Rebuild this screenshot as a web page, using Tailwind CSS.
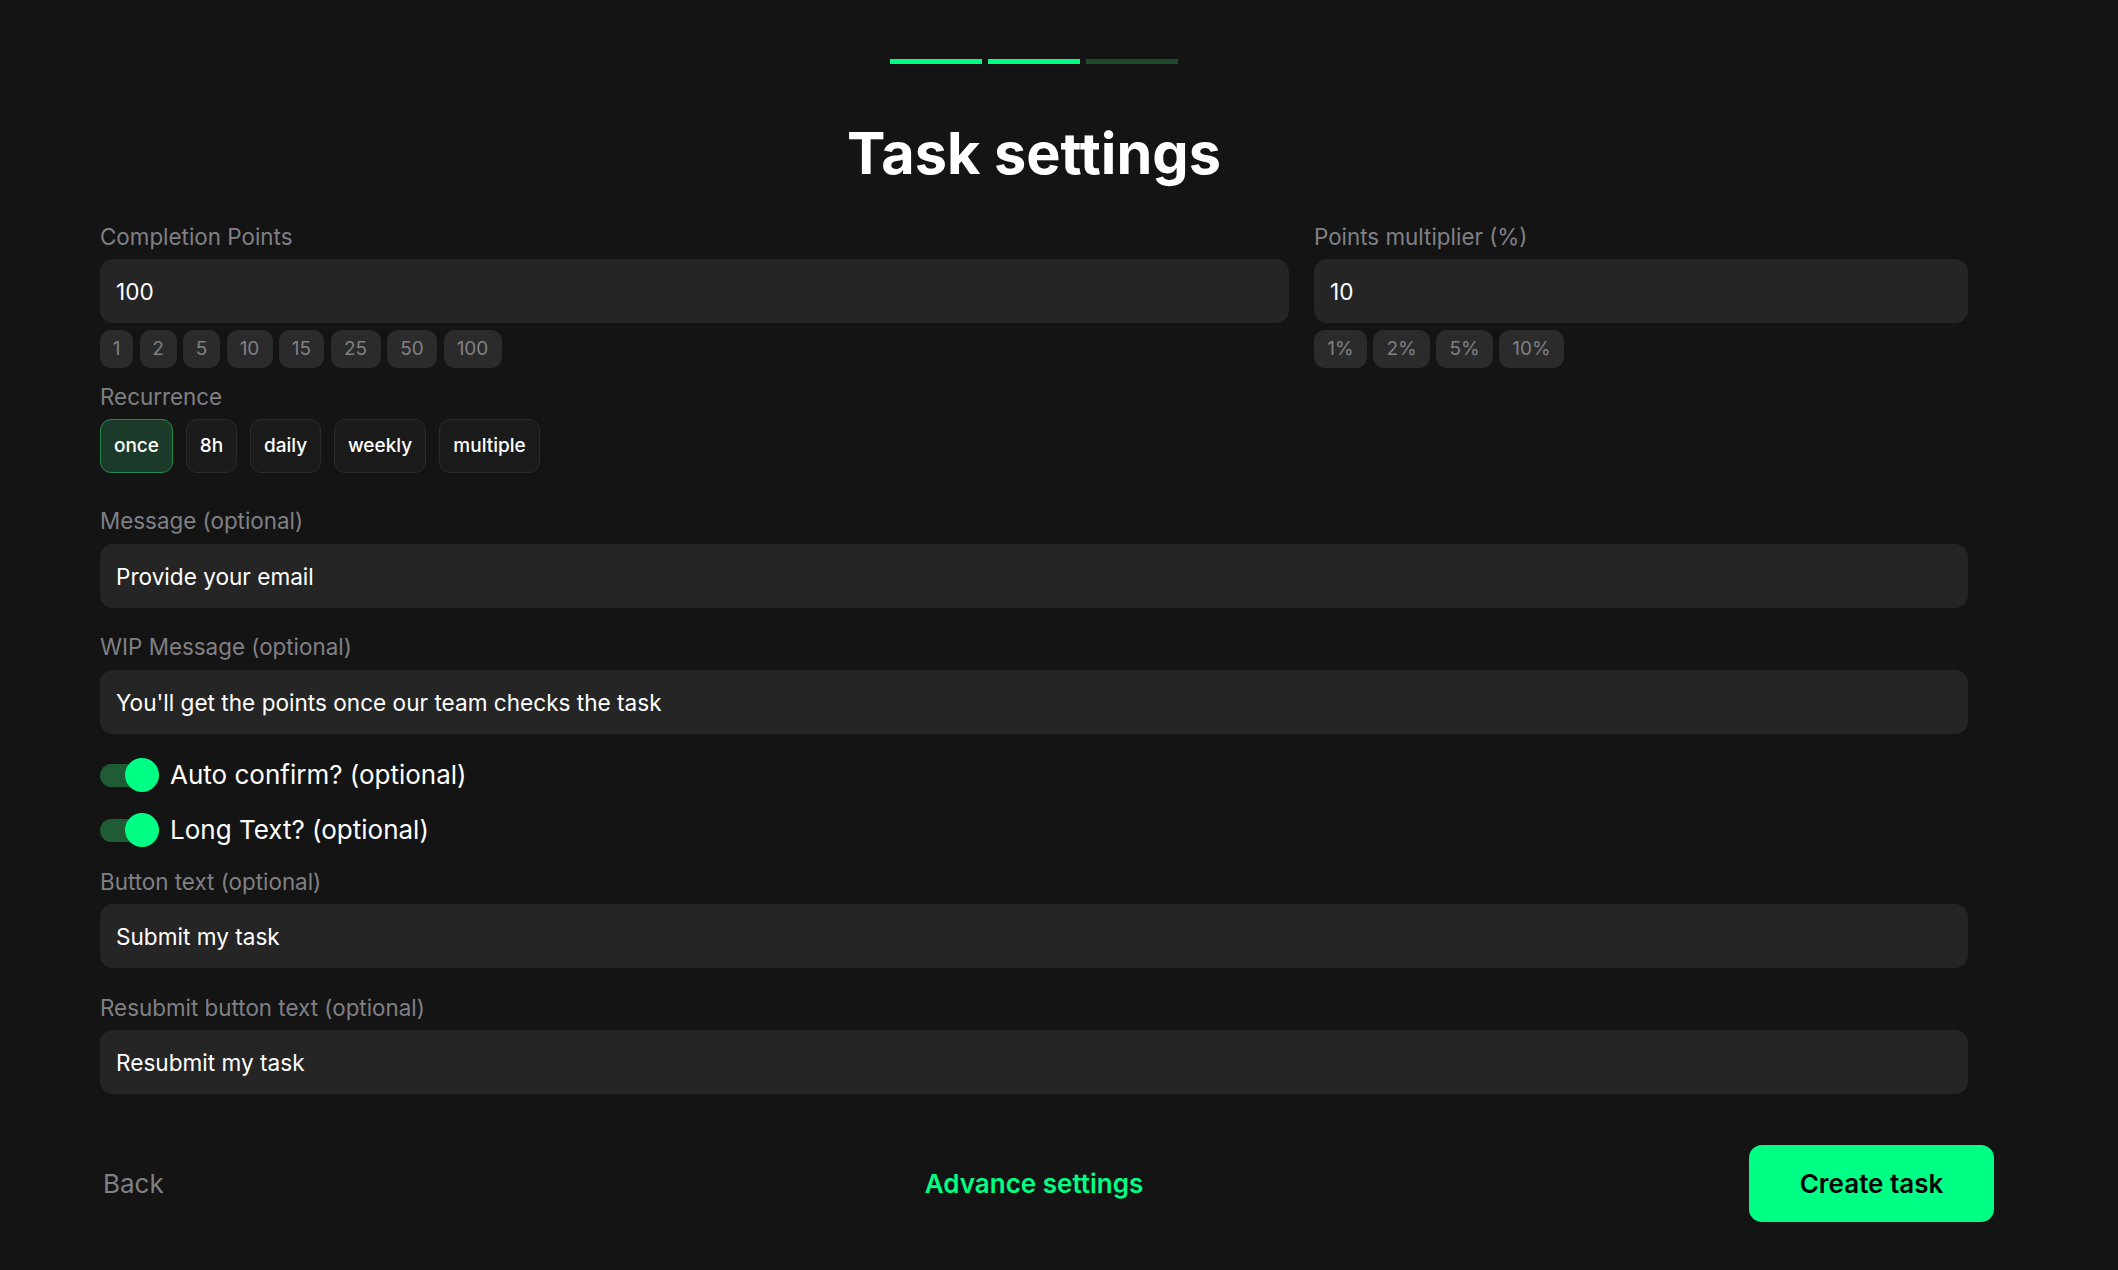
<!DOCTYPE html>
<html lang="en">
<head>
<meta charset="utf-8">
<title>Task settings</title>
<script src="https://cdn.jsdelivr.net/npm/@tailwindcss/browser@4"></script>
</head>
<body class="m-0 h-[1270px] overflow-hidden bg-[#141414] font-['Inter',sans-serif] text-white">
<main class="ml-[100px] w-[1868px] pt-[59px]">
  <div class="flex justify-center gap-[6px]">
    <div class="h-[5px] w-[92px] bg-[#00ff85]"></div>
    <div class="h-[5px] w-[92px] bg-[#00ff85]"></div>
    <div class="h-[5px] w-[92px] bg-[#1f4a2e]"></div>
  </div>
  <h1 class="mt-[55px] text-center text-[57.6px] leading-[68px] font-bold">Task settings</h1>

  <div class="mt-[34px] grid grid-cols-[1189px_654px] gap-x-[25px]">
    <div>
      <label class="block text-[22.4px] leading-[32px] text-[#808084]">Completion Points</label>
      <input class="mt-[6px] block h-[64px] w-full rounded-[13px] bg-[#252525] px-[16px] text-[22.6px] text-white outline-none" value="100">
      <div class="mt-[7px] flex gap-[6.5px] text-[19px] text-[#808084]">
        <span class="flex h-[38px] w-[33px] items-center justify-center rounded-[11px] bg-[#2b2b2b]">1</span>
        <span class="flex h-[38px] w-[37px] items-center justify-center rounded-[11px] bg-[#2b2b2b]">2</span>
        <span class="flex h-[38px] w-[37px] items-center justify-center rounded-[11px] bg-[#2b2b2b]">5</span>
        <span class="flex h-[38px] w-[46px] items-center justify-center rounded-[11px] bg-[#2b2b2b]">10</span>
        <span class="flex h-[38px] w-[45px] items-center justify-center rounded-[11px] bg-[#2b2b2b]">15</span>
        <span class="flex h-[38px] w-[50px] items-center justify-center rounded-[11px] bg-[#2b2b2b]">25</span>
        <span class="flex h-[38px] w-[50px] items-center justify-center rounded-[11px] bg-[#2b2b2b]">50</span>
        <span class="flex h-[38px] w-[58px] items-center justify-center rounded-[11px] bg-[#2b2b2b]">100</span>
      </div>
    </div>
    <div>
      <label class="block text-[22.4px] leading-[32px] text-[#808084]">Points multiplier (%)</label>
      <input class="mt-[6px] block h-[64px] w-full rounded-[13px] bg-[#252525] px-[16px] text-[22.6px] text-white outline-none" value="10">
      <div class="mt-[7px] flex gap-[6px] text-[19px] text-[#808084]">
        <span class="flex h-[38px] w-[53px] items-center justify-center rounded-[11px] bg-[#2b2b2b]">1%</span>
        <span class="flex h-[38px] w-[57px] items-center justify-center rounded-[11px] bg-[#2b2b2b]">2%</span>
        <span class="flex h-[38px] w-[57px] items-center justify-center rounded-[11px] bg-[#2b2b2b]">5%</span>
        <span class="flex h-[38px] w-[65px] items-center justify-center rounded-[11px] bg-[#2b2b2b]">10%</span>
      </div>
    </div>
  </div>

  <label class="mt-[13px] block text-[22.4px] leading-[32px] text-[#808084]">Recurrence</label>
  <div class="mt-[6px] flex gap-[13px] text-[19px] font-medium">
    <span class="flex h-[54px] w-[73px] items-center justify-center rounded-[11px] border border-[#1f8a4c] bg-[#1c3a29]">once</span>
    <span class="flex h-[54px] w-[51px] items-center justify-center rounded-[11px] border border-[#2a2a2a] bg-[#1b1b1b]">8h</span>
    <span class="flex h-[54px] w-[71px] items-center justify-center rounded-[11px] border border-[#2a2a2a] bg-[#1b1b1b]">daily</span>
    <span class="flex h-[54px] w-[92px] items-center justify-center rounded-[11px] border border-[#2a2a2a] bg-[#1b1b1b]">weekly</span>
    <span class="flex h-[54px] w-[101px] items-center justify-center rounded-[11px] border border-[#2a2a2a] bg-[#1b1b1b]">multiple</span>
  </div>

  <label class="mt-[32px] block text-[22.4px] leading-[32px] text-[#808084]">Message (optional)</label>
  <input class="mt-[7px] block h-[64px] w-full rounded-[13px] bg-[#252525] px-[16px] text-[22.6px] text-white outline-none" value="Provide your email">

  <label class="mt-[23px] block text-[22.4px] leading-[32px] text-[#808084]">WIP Message (optional)</label>
  <input class="mt-[7px] block h-[64px] w-full rounded-[13px] bg-[#252525] px-[16px] text-[22.6px] text-white outline-none" value="You'll get the points once our team checks the task">

  <div class="mt-[24px] flex h-[34px] items-center gap-[11px] text-[26px]">
    <span class="relative block h-[23px] w-[59px] rounded-full bg-[#1f5c35]"><span class="absolute top-[-6px] right-0 size-[34px] rounded-full bg-[#00ff85]"></span></span>
    <span class="pb-[1px]">Auto confirm? (optional)</span>
  </div>
  <div class="mt-[21px] flex h-[34px] items-center gap-[11px] text-[26px]">
    <span class="relative block h-[23px] w-[59px] rounded-full bg-[#1f5c35]"><span class="absolute top-[-6px] right-0 size-[34px] rounded-full bg-[#00ff85]"></span></span>
    <span class="pb-[2px]">Long Text? (optional)</span>
  </div>

  <label class="mt-[19px] block text-[22.4px] leading-[32px] text-[#808084]">Button text (optional)</label>
  <input class="mt-[6px] block h-[64px] w-full rounded-[13px] bg-[#252525] px-[16px] text-[22.6px] text-white outline-none" value="Submit my task">

  <label class="mt-[24px] block text-[22.4px] leading-[32px] text-[#808084]">Resubmit button text (optional)</label>
  <input class="mt-[6px] block h-[64px] w-full rounded-[13px] bg-[#252525] px-[16px] text-[22.6px] text-white outline-none" value="Resubmit my task">

  <footer class="mx-[-26px] mt-[51px] grid h-[77px] grid-cols-3 items-center">
    <span class="pl-[29px] text-[26px] text-[#808084]">Back</span>
    <span class="text-center text-[26px] font-semibold text-[#00ff85]">Advance settings</span>
    <span class="flex justify-end"><button class="h-[77px] w-[245px] rounded-[13px] bg-[#00ff85] text-[26px] font-semibold text-black">Create task</button></span>
  </footer>
</main>
</body>
</html>
